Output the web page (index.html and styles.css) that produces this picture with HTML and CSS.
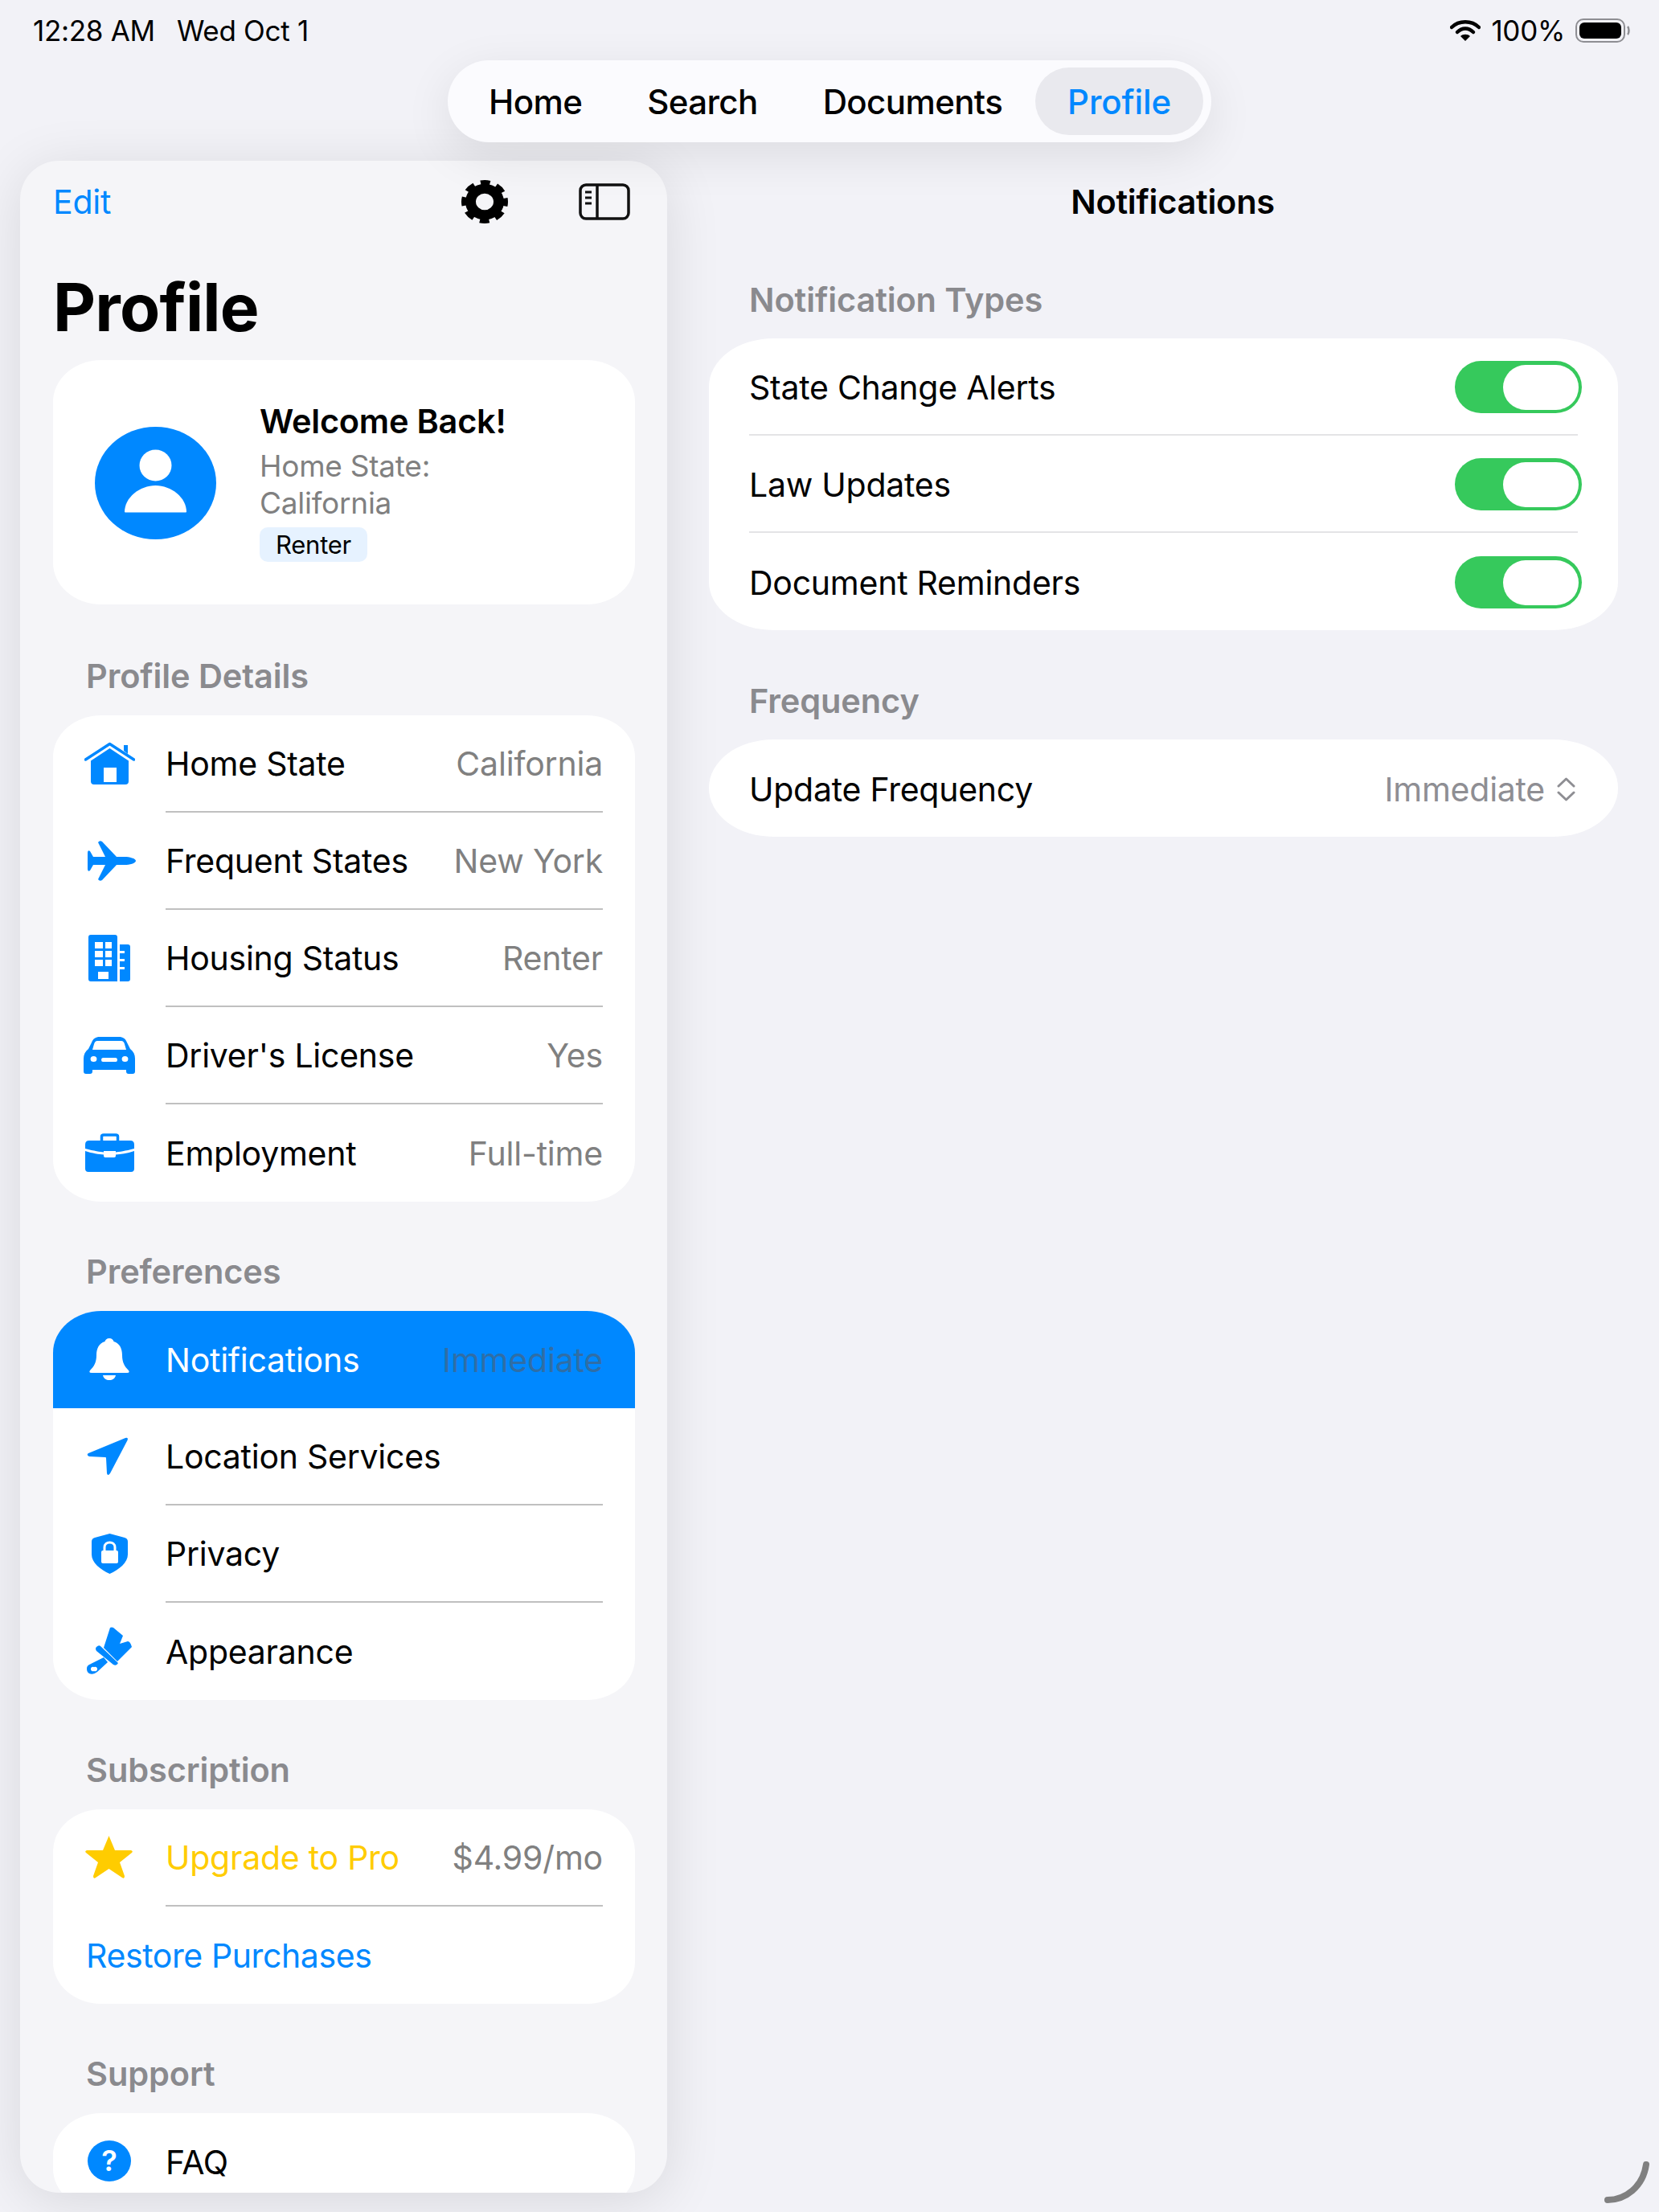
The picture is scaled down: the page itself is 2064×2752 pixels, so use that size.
FILE: index.html
```html
<!DOCTYPE html>
<html lang="en">
<head>
    <meta charset="UTF-8">
    <title>Profile</title>
    <link rel="stylesheet" href="styles.css">
</head>
<body>
    <div class="status-bar">
        <div class="status-left">
            <span>12:28 AM</span>
            <span>Wed Oct 1</span>
        </div>
        <div class="status-right">
            <svg class="wifi" viewBox="0 0 38 28">
                <path d="M2 10 C11 1 27 1 36 10" fill="none" stroke="#000" stroke-width="4.5" stroke-linecap="round"/>
                <path d="M9 16 C15 10 23 10 29 16" fill="none" stroke="#000" stroke-width="4.5" stroke-linecap="round"/>
                <path d="M19 27 L13 21 C16 18 22 18 25 21 Z" fill="#000"/>
            </svg>
            <span>100%</span>
            <svg class="battery" viewBox="0 0 68 30">
                <rect x="1" y="1" width="60" height="28" rx="9" fill="none" stroke="#8e8e93" stroke-width="2"/>
                <rect x="5" y="5" width="52" height="20" rx="6" fill="#000"/>
                <path d="M65 10 C67 12 67 18 65 20" fill="none" stroke="#8e8e93" stroke-width="2.5"/>
            </svg>
        </div>
    </div>

    <nav class="tabs">
        <a class="tab">Home</a>
        <a class="tab">Search</a>
        <a class="tab">Documents</a>
        <a class="tab active">Profile</a>
    </nav>

    <div class="main">
        <aside class="sidebar">
            <div class="sidebar-top">
                <a class="edit">Edit</a>
                <div class="sidebar-tools">
                    <svg class="gear" viewBox="0 0 58 58" preserveAspectRatio="none">
                        <circle cx="29" cy="29" r="17.500" fill="none" stroke="#000" stroke-width="13"/>
                        <circle cx="29" cy="29" r="25" fill="none" stroke="#000" stroke-width="8" stroke-dasharray="11.500 8.135" stroke-dashoffset="5.750"/>
                    </svg>
                    <svg class="panel-icon" viewBox="0 0 64 46">
                        <rect x="2" y="2" width="60" height="42" rx="7" fill="none" stroke="#111" stroke-width="3.500"/>
                        <path d="M23 2 V44" stroke="#111" stroke-width="3.500"/>
                        <path d="M8 11 H16 M8 18 H16 M8 25 H16" stroke="#111" stroke-width="3"/>
                    </svg>
                </div>
            </div>
            <h1 class="title">Profile</h1>

            <div class="hero">
                <svg class="avatar" viewBox="0 0 151 140">
                    <ellipse cx="75.500" cy="70" rx="75.500" ry="70" fill="#0088ff"/>
                    <ellipse cx="75.500" cy="48" rx="20" ry="19.500" fill="#fff"/>
                    <path d="M37 106 C37 88 56 73 75.500 73 C95 73 114 88 114 106 Q114 106.500 110 106.500 H41 Q37 106.500 37 106 Z" fill="#fff"/>
                </svg>
                <div class="hero-text">
                    <div class="hero-name">Welcome Back!</div>
                    <div class="hero-sub">Home State:<br>California</div>
                    <span class="badge">Renter</span>
                </div>
            </div>

            <h2 class="section">Profile Details</h2>
            <div class="card">
                <div class="row">
                    <div class="row-icon">
                        <svg width="63" height="53" viewBox="0 0 63 53">
                            <path d="M1.500 22 L31.500 2.500 L61.500 22" fill="none" stroke="#0088ff" stroke-width="3.500" stroke-linecap="round" stroke-linejoin="round"/>
                            <path d="M49 4 H54 V15 L49 11 Z" fill="#0088ff"/>
                            <path fill-rule="evenodd" fill="#0088ff" d="M31.500 8 L55 23.500 V49 Q55 53 51 53 H12 Q8 53 8 49 V23.500 Z M24 32 V50 H40 V32 Z"/>
                        </svg>
                    </div>
                    <div class="row-body"><span>Home State</span><span class="value">California</span></div>
                </div>
                <div class="row">
                    <div class="row-icon">
                        <svg class="nudge-right" width="60" height="50" viewBox="0 0 60 50">
                            <path fill="#0088ff" d="M60 25 C60 22 52 20 46 20 H36 L18 1 Q15 -1 13 2 L22 20 H7 L3 13 Q0 11 0 15 V35 Q0 39 3 37 L7 30 H22 L13 48 Q15 51 18 49 L36 30 H46 C52 30 60 28 60 25 Z"/>
                        </svg>
                    </div>
                    <div class="row-body"><span>Frequent States</span><span class="value">New York</span></div>
                </div>
                <div class="row">
                    <div class="row-icon">
                        <svg width="52" height="58" viewBox="0 0 52 58">
                            <path fill-rule="evenodd" fill="#0088ff" d="M3 0 H33 Q36 0 36 3 V58 H3 Q0 58 0 55 V3 Q0 0 3 0 Z M8 9 V17 H18 V9 Z M21 9 V17 H29 V9 Z M8 20 V28 H18 V20 Z M21 20 V28 H29 V20 Z M8 31 V39 H18 V31 Z M21 31 V39 H29 V31 Z M12 46 V55 H25 V46 Z"/>
                            <path fill="#0088ff" d="M39 12 H49 Q52 12 52 15 V55 Q52 58 49 58 H39 V43 H45 V40 H39 V33 H45 V30 H39 V23 H45 V20 H39 Z"/>
                        </svg>
                    </div>
                    <div class="row-body"><span>Housing Status</span><span class="value">Renter</span></div>
                </div>
                <div class="row">
                    <div class="row-icon">
                        <svg width="64" height="46" viewBox="0 0 64 46">
                            <path fill-rule="evenodd" fill="#0088ff" d="M20 0 H44 C49 0 52 2 54 7 L58 15 C62 18 64 22 64 27 V43 Q64 46 61 46 H56 Q53 46 53 43 V41 H11 V43 Q11 46 8 46 H3 Q0 46 0 43 V27 C0 22 2 18 6 15 L10 7 C12 2 15 0 20 0 Z M17 5 C15 5 14 6 13 9 L11 16 H53 L51 9 C50 6 49 5 47 5 Z M12.500 24 A3.800 3.400 0 1 0 12.500 31 A3.800 3.400 0 1 0 12.500 24 Z M51.500 24 A3.800 3.400 0 1 0 51.500 31 A3.800 3.400 0 1 0 51.500 24 Z M24 26 Q22 26 22 28.500 Q22 31 24 31 H40 Q42 31 42 28.500 Q42 26 40 26 Z"/>
                        </svg>
                    </div>
                    <div class="row-body"><span>Driver's License</span><span class="value">Yes</span></div>
                </div>
                <div class="row">
                    <div class="row-icon">
                        <svg width="61" height="48" viewBox="0 0 61 48">
                            <path d="M20.500 9 V4 Q20.500 2 23 2 H38 Q40.500 2 40.500 4 V9" fill="none" stroke="#0088ff" stroke-width="3.500"/>
                            <path fill="#0088ff" d="M5 9 H56 Q61 9 61 14 V19 C50 22 42 23 38 23.500 V22 H23 V23.500 C19 23 11 22 0 19 V14 Q0 9 5 9 Z"/>
                            <path fill="#0088ff" d="M0 22 C9 25 17 26 23 26.500 V28 Q23 30 25 30 H36 Q38 30 38 28 V26.500 C44 26 52 25 61 22 V44 Q61 48 57 48 H4 Q0 48 0 44 Z"/>
                        </svg>
                    </div>
                    <div class="row-body last"><span>Employment</span><span class="value">Full-time</span></div>
                </div>
            </div>

            <h2 class="section">Preferences</h2>
            <div class="card">
                <div class="row selected">
                    <div class="row-icon">
                        <svg width="50" height="52" viewBox="0 0 50 52">
                            <path fill="#fff" d="M25 0 C28 0 30 2 30.500 4 C38 6 41 13 41 21 C41 30 44 35 49 40 Q51 43 47 43 H3 Q-1 43 1 40 C6 35 9 30 9 21 C9 13 12 6 19.500 4 C20 2 22 0 25 0 Z"/>
                            <path fill="#fff" d="M17 46 H33 C32 50 29 52 25 52 C21 52 18 50 17 46 Z"/>
                        </svg>
                    </div>
                    <div class="row-body last"><span>Notifications</span><span class="value">Immediate</span></div>
                </div>
                <div class="row">
                    <div class="row-icon">
                        <svg class="nudge-left" width="51" height="48" viewBox="0 0 51 48">
                            <path fill="#0088ff" d="M48 1 Q52 0 50.500 4 L29 45 Q26 49 25 45 L24 26 Q24 25 23 25 L3 24 Q-1 22 2 20 Z"/>
                        </svg>
                    </div>
                    <div class="row-body"><span>Location Services</span></div>
                </div>
                <div class="row">
                    <div class="row-icon">
                        <svg width="45" height="50" viewBox="0 0 45 50">
                            <path fill="#0088ff" d="M22.500 0 L41 5 Q45 6 45 10 V26 C45 36 34 45 22.500 50 C11 45 0 36 0 26 V10 Q0 6 4 5 Z"/>
                            <rect x="12" y="21" width="21" height="16" rx="2" fill="#fff"/>
                            <path d="M16 22 V17 C16 9 29 9 29 17 V22" fill="none" stroke="#fff" stroke-width="3"/>
                        </svg>
                    </div>
                    <div class="row-body"><span>Privacy</span></div>
                </div>
                <div class="row">
                    <div class="row-icon">
                        <svg width="56" height="59" viewBox="0 0 56 59">
                            <path fill="#0088ff" d="M29 1 Q31 0 33 1 L45 11 L41 21 L51 18 Q54 18 56 25 L38 43 L21 26 Z"/>
                            <path fill="#0088ff" d="M12 25 Q15 22 17 24 L39 45 Q37 49 33 47 L12 30 Q10 27 12 25 Z"/>
                            <path fill-rule="evenodd" fill="#0088ff" d="M21 38 L26 44 L13 56 C8 60 0 60 0 52 C0 48 3 47 7 45 Z M9 50 A2.800 2.800 0 1 0 9 55 A2.800 2.800 0 1 0 9 50 Z"/>
                        </svg>
                    </div>
                    <div class="row-body last"><span>Appearance</span></div>
                </div>
            </div>

            <h2 class="section">Subscription</h2>
            <div class="card">
                <div class="row">
                    <div class="row-icon">
                        <svg class="star" width="59" height="53" viewBox="0 0 59 53">
                            <path fill="#ffcc00" d="M29.500 0 L37 18 L57 18 Q60 19 58 21 L43 33 L49 50 Q49 54 46 52 L29.500 41 L13 52 Q10 54 10 50 L16 33 L1 21 Q-1 19 2 18 L22 18 Z"/>
                        </svg>
                    </div>
                    <div class="row-body"><span class="gold">Upgrade to Pro</span><span class="value">$4.99/mo</span></div>
                </div>
                <div class="row plain">
                    <span class="link">Restore Purchases</span>
                </div>
            </div>

            <h2 class="section">Support</h2>
            <div class="card">
                <div class="row">
                    <div class="row-icon">
                        <div class="help-icon">?</div>
                    </div>
                    <div class="row-body last"><span>FAQ</span></div>
                </div>
            </div>
        </aside>

        <section class="detail">
            <div class="detail-title">Notifications</div>
            <h2 class="detail-section">Notification Types</h2>
            <div class="detail-card">
                <div class="detail-row">
                    <span>State Change Alerts</span>
                    <div class="toggle"><div class="thumb"></div></div>
                </div>
                <div class="detail-row">
                    <span>Law Updates</span>
                    <div class="toggle"><div class="thumb"></div></div>
                </div>
                <div class="detail-row last">
                    <span>Document Reminders</span>
                    <div class="toggle"><div class="thumb"></div></div>
                </div>
            </div>
            <h2 class="detail-section">Frequency</h2>
            <div class="detail-card">
                <div class="detail-row last">
                    <span>Update Frequency</span>
                    <div class="picker">
                        <span>Immediate</span>
                        <svg width="23" height="30" viewBox="0 0 23 30">
                            <path d="M2 11 L11.500 2 L21 11 M2 19 L11.500 28 L21 19" fill="none" stroke="#8e8e93" stroke-width="3" stroke-linecap="round" stroke-linejoin="round"/>
                        </svg>
                    </div>
                </div>
            </div>
        </section>
    </div>

    <svg class="spinner" viewBox="0 0 56 52">
        <path d="M4 48 C26 48 48 32 52 4" fill="none" stroke="#808080" stroke-width="8" stroke-linecap="round"/>
    </svg>
</body>
</html>
```

FILE: styles.css
```css
* {
    box-sizing: border-box;
}
html, body {
    margin: 0;
    padding: 0;
}
body {
    position: relative;
    width: 2064px;
    height: 2752px;
    overflow: hidden;
    background-color: #f2f2f7;
    color: #000;
    font-family: Inter, "Noto Sans", sans-serif;
    font-size: 41px;
    letter-spacing: -0.25px;
}

/* status bar */
.status-bar {
    display: flex;
    justify-content: space-between;
    align-items: center;
    height: 75px;
    padding: 0 36px 0 41px;
    font-size: 35px;
    letter-spacing: -0.3px;
}
.status-left {
    display: flex;
    gap: 27px;
}
.status-right {
    display: flex;
    align-items: center;
    gap: 13px;
}
.wifi {
    width: 38px;
    height: 28px;
}
.battery {
    width: 68px;
    height: 30px;
}

/* top tabs */
.tabs {
    display: flex;
    align-items: center;
    width: 950px;
    height: 102px;
    margin: 0 auto;
    padding: 0 10px 0 51px;
    background-color: #fbfbfe;
    border-radius: 51px;
    box-shadow: 0 16px 60px rgba(0, 0, 0, 0.09);
    font-size: 42px;
    font-weight: 500;
    letter-spacing: -0.6px;
    position: relative;
    z-index: 2;
}
.tab {
    margin-right: 81px;
}
.tab:nth-child(3) {
    margin-right: 0;
}
.tab.active {
    display: flex;
    align-items: center;
    height: 84px;
    margin: 0 0 0 auto;
    padding: 0 40px;
    border-radius: 42px;
    background-color: #e9e9ee;
    color: #0088ff;
    letter-spacing: -0.1px;
}

/* layout */
.main {
    display: flex;
    align-items: flex-start;
    margin-top: 23px;
    padding-left: 25px;
}

/* left column */
.sidebar {
    width: 805px;
    height: 2528px;
    flex-shrink: 0;
    overflow: hidden;
    padding: 0 40px 0 41px;
    background-color: #f5f5f8;
    border-radius: 48px;
    box-shadow: 0 10px 70px rgba(0, 0, 0, 0.11);
}
.sidebar-top {
    display: flex;
    justify-content: space-between;
    align-items: center;
    height: 102px;
}
.edit {
    color: #0088ff;
}
.sidebar-tools {
    display: flex;
    align-items: center;
    gap: 88px;
    margin-right: -34px;
    padding-right: 40px;
}
.gear {
    width: 58px;
    height: 54px;
}
.panel-icon {
    width: 64px;
    height: 46px;
}
.title {
    margin: 0;
    height: 146px;
    padding-top: 36px;
    font-size: 82px;
    font-weight: 700;
    line-height: 90px;
    letter-spacing: -0.8px;
}
.hero {
    display: flex;
    align-items: center;
    height: 304px;
    margin-bottom: 2px;
    padding-left: 52px;
    background-color: #fff;
    border-radius: 60px / 52px;
}
.avatar {
    width: 151px;
    height: 140px;
    flex-shrink: 0;
    margin-top: 2px;
}
.hero-text {
    margin: 0 0 4px 54px;
}
.hero-name {
    font-size: 41.5px;
    font-weight: 600;
    line-height: 54px;
}
.hero-sub {
    color: #808080;
    font-size: 37px;
    line-height: 46px;
    margin-top: 6px;
}
.badge {
    display: inline-block;
    height: 43px;
    margin-top: 7px;
    padding: 0 20px;
    border-radius: 10px;
    background-color: #e6f2ff;
    font-size: 31px;
    line-height: 43px;
}
.section {
    margin: 0;
    height: 136px;
    padding: 61px 0 0 41px;
    color: #8a8a8e;
    font-size: 41.5px;
    font-weight: 600;
    line-height: 52px;
    letter-spacing: -0.1px;
}
.card {
    background-color: #fff;
    border-radius: 60px / 52px;
    overflow: hidden;
}
.row {
    display: flex;
    align-items: stretch;
    height: 121px;
}
.row-icon {
    display: flex;
    justify-content: center;
    align-items: center;
    width: 140px;
    flex-shrink: 0;
    padding-bottom: 2px;
}
.nudge-right {
    margin-left: 6px;
}
.nudge-left {
    margin-right: 5px;
}
.star {
    margin-right: 2px;
}
.row-body {
    flex: 1;
    display: flex;
    justify-content: space-between;
    align-items: center;
    margin-right: 40px;
    border-bottom: 2px solid #c0c0c0;
}
.row-body.last {
    border-bottom: none;
}
.value {
    color: #808080;
    letter-spacing: -0.2px;
}
.selected {
    background-color: #0088ff;
    color: #fff;
}
.selected .value {
    color: #2f6ea6;
}
.gold {
    color: #ffcc00;
}
.plain {
    align-items: center;
    padding-left: 41px;
}
.link {
    color: #0088ff;
    letter-spacing: -0.4px;
}
.help-icon {
    width: 54px;
    height: 51px;
    border-radius: 50%;
    background-color: #0088ff;
    color: #fff;
    font-size: 36px;
    font-weight: 600;
    line-height: 51px;
    text-align: center;
}

/* right column */
.detail {
    flex: 1;
    padding: 0 51px 0 52px;
}
.detail-title {
    height: 102px;
    padding-left: 23px;
    line-height: 102px;
    text-align: center;
    font-size: 41.5px;
    font-weight: 600;
}
.detail-section {
    margin: 0;
    height: 119px;
    padding: 45px 0 0 50px;
    color: #8a8a8e;
    font-size: 41.5px;
    font-weight: 600;
    line-height: 52px;
    letter-spacing: -0.1px;
}
.detail-card {
    background-color: #fff;
    border-radius: 80px / 60px;
    overflow: hidden;
    padding-left: 50px;
}
.detail-card + .detail-section {
    height: 136px;
    padding-top: 62px;
}
.detail-row {
    display: flex;
    justify-content: space-between;
    align-items: center;
    height: 121px;
    margin-right: 50px;
    padding-top: 2px;
    border-bottom: 2px solid #e4e4e6;
}
.detail-row.last {
    border-bottom: none;
}
.toggle {
    display: flex;
    justify-content: flex-end;
    align-items: center;
    width: 158px;
    height: 65px;
    margin-right: -5px;
    padding-right: 4px;
    border-radius: 33px;
    background-color: #36c95c;
}
.thumb {
    width: 94px;
    height: 56px;
    border-radius: 28px;
    background-color: #fff;
}
.picker {
    display: flex;
    align-items: center;
    gap: 15px;
    margin-right: 3px;
    color: #8e8e93;
}

.spinner {
    position: absolute;
    right: 12px;
    bottom: 11px;
    width: 56px;
    height: 52px;
}
```
